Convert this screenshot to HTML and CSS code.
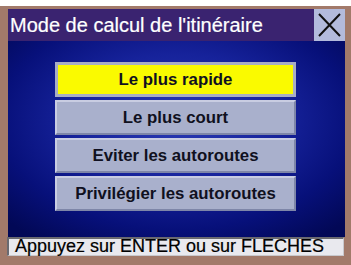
FILE: index.html
```html
<!DOCTYPE html>
<html lang="fr">
<head>
<meta charset="utf-8">
<link rel="stylesheet" href="styles.css">
</head>
<body>
<div class="frame">
  <div class="titlebar">
    <div class="title">Mode de calcul de l'itinéraire</div>
    <div class="close">
      <svg width="31" height="32" viewBox="0 0 31 32"><path d="M5 5 L26 27 M26 5 L5 27" stroke="#101010" stroke-width="2" fill="none"/></svg>
    </div>
  </div>
  <div class="content">
    <div class="menu">
      <div class="btn selected">Le plus rapide</div>
      <div class="btn">Le plus court</div>
      <div class="btn">Eviter les autoroutes</div>
      <div class="btn">Privilégier les autoroutes</div>
    </div>
  </div>
  <div class="status">Appuyez sur ENTER ou sur FLECHES</div>
</div>
</body>
</html>
```
FILE: styles.css
```css
html, body {
  margin: 0;
  padding: 0;
  background: #ffffff;
}
body {
  width: 351px;
  height: 265px;
  overflow: hidden;
  font-family: "Liberation Sans", Arial, sans-serif;
}
.frame {
  margin-top: 6px;
  height: 259px;
  box-sizing: border-box;
  background: #a27a6a;
  padding: 3px 6px 9px 8px;
  display: flex;
  flex-direction: column;
}
.titlebar {
  display: flex;
  height: 32px;
  flex: none;
}
.title {
  flex: 1;
  background: #3a2370;
  color: #ffffff;
  font-size: 20px;
  line-height: 32px;
  padding-left: 2px;
  white-space: nowrap;
  -webkit-text-stroke: 0.2px #ffffff;
}
.close {
  width: 31px;
  background: #b3bbdc;
}
.close svg {
  display: block;
}
.content {
  flex: none;
  height: 196px;
  background: radial-gradient(ellipse 70% 75% at 50% 40%, #2a3ab4 0%, #16229a 45%, #07107a 75%, #020856 100%);
  padding-top: 21px;
  box-sizing: border-box;
}
.menu {
  margin-left: 47px;
  width: 241px;
  display: flex;
  flex-direction: column;
  gap: 3px;
}
.btn {
  height: 35px;
  box-sizing: border-box;
  background: #a9b0cc;
  border: 2px solid;
  border-color: #c9cde2 #7e86a8 #7e86a8 #c9cde2;
  color: #101020;
  font-weight: bold;
  font-size: 16.8px;
  line-height: 31px;
  text-align: center;
  white-space: nowrap;
}
.btn.selected {
  background: #fafa00;
  border: 3px solid #a8adc4;
  line-height: 29px;
}
.status {
  flex: none;
  margin-left: -1px;
  margin-right: 1px;
  height: 19px;
  box-sizing: border-box;
  background: #e9e9ee;
  border-top: 2px solid #6a6a70;
  border-left: 2px solid #6a6a70;
  border-right: 1px solid #c8c8cc;
  border-bottom: 1px solid #c8c8cc;
  color: #000000;
  font-size: 18px;
  line-height: 15px;
  padding-left: 6px;
  white-space: nowrap;
  -webkit-text-stroke: 0.2px #000000;
}
```
